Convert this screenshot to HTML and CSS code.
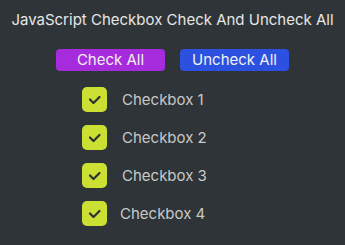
FILE: index.html
```html
<!DOCTYPE html>
<html>
<head>
<meta charset="utf-8">
<link rel="stylesheet" href="styles.css">
</head>
<body>
<div class="app">
  <h1 class="title">JavaScript Checkbox Check And Uncheck All</h1>
  <div class="buttons">
    <button class="btn btn-check">Check All</button>
    <button class="btn btn-uncheck">Uncheck All</button>
  </div>
  <ul class="list">
    <li class="item"><span class="box"><svg viewBox="0 0 25 25" width="25" height="25"><polyline points="8,12.5 11.5,16 17.5,10" fill="none" stroke="#2b3033" stroke-width="2.2" stroke-linecap="round" stroke-linejoin="round"/></svg></span><span class="label">Checkbox 1</span></li>
    <li class="item"><span class="box"><svg viewBox="0 0 25 25" width="25" height="25"><polyline points="8,12.5 11.5,16 17.5,10" fill="none" stroke="#2b3033" stroke-width="2.2" stroke-linecap="round" stroke-linejoin="round"/></svg></span><span class="label">Checkbox 2</span></li>
    <li class="item"><span class="box"><svg viewBox="0 0 25 25" width="25" height="25"><polyline points="8,12.5 11.5,16 17.5,10" fill="none" stroke="#2b3033" stroke-width="2.2" stroke-linecap="round" stroke-linejoin="round"/></svg></span><span class="label">Checkbox 3</span></li>
    <li class="item"><span class="box"><svg viewBox="0 0 25 25" width="25" height="25"><polyline points="8,12.5 11.5,16 17.5,10" fill="none" stroke="#2b3033" stroke-width="2.2" stroke-linecap="round" stroke-linejoin="round"/></svg></span><span class="label label-tight">Checkbox 4</span></li>
  </ul>
</div>
</body>
</html>
```
FILE: styles.css
```css
html, body {
  margin: 0;
  padding: 0;
  background: #2e3437;
  height: 100%;
}
body {
  font-family: Inter, "Noto Sans", sans-serif;
}
.app {
  display: flex;
  flex-direction: column;
  align-items: center;
  padding-top: 11px;
}
.title {
  margin: 0;
  font-size: 15px;
  font-weight: 400;
  color: #e6e6e6;
  line-height: 18px;
}
.buttons {
  display: flex;
  gap: 15px;
  margin-top: 20px;
}
.btn {
  width: 109px;
  height: 22px;
  border: none;
  border-radius: 4px;
  font-family: Inter, "Noto Sans", sans-serif;
  font-size: 15px;
  color: #f2f2f2;
  padding: 0;
  line-height: 22px;
}
.btn-check { background: #a62bdc; }
.btn-uncheck { background: #2c50df; }
.list {
  list-style: none;
  margin: 16px 0 0 0;
  padding: 0;
  align-self: flex-start;
  margin-left: 82px;
  display: flex;
  flex-direction: column;
  gap: 13px;
}
.item {
  display: flex;
  align-items: center;
  height: 25px;
}
.box {
  width: 25px;
  height: 25px;
  border-radius: 5px;
  background: #cbe033;
  display: block;
}
.box svg { display: block; }
.label {
  margin-left: 15px;
  font-size: 15px;
  color: #c9c9c9;
}
.label-tight { margin-left: 13px; }
```
